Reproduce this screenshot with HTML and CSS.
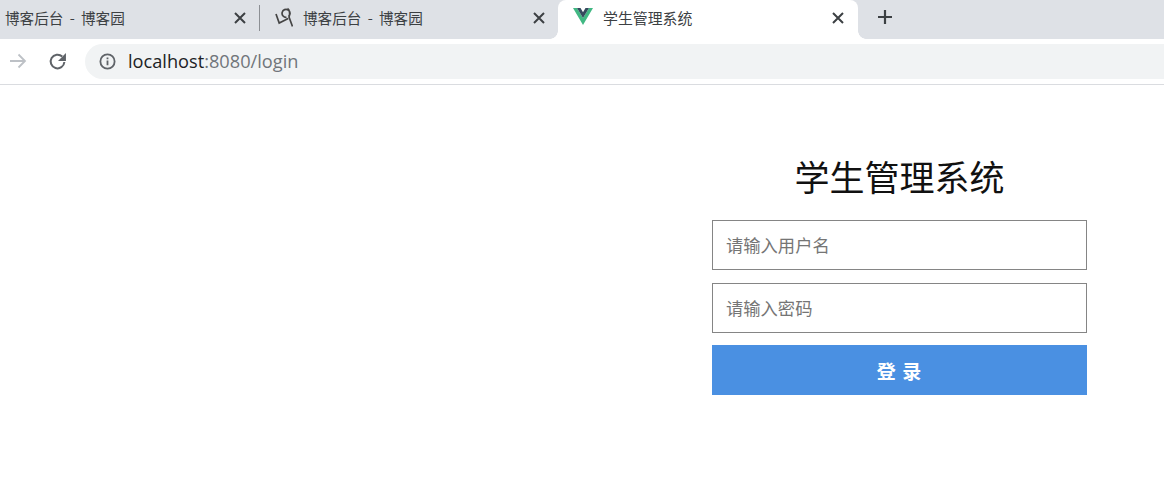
FILE: index.html
```html
<!DOCTYPE html>
<html lang="zh-CN">
<head>
<meta charset="utf-8">
<title>学生管理系统</title>
<link rel="stylesheet" href="styles.css">
</head>
<body>
<div class="tabstrip">
  <div class="tab tab-first">
    <span class="tab-title">博客后台 - 博客园</span>
    <svg class="close" viewBox="0 0 12 12"><path d="M1 1l10 10M11 1L1 11"/></svg>
  </div>
  <div class="tab-sep"></div>
  <div class="tab tab-second">
    <svg class="favicon favicon-cnb" viewBox="0 0 18 20"><path d="M1 7l3.200 9 9-4.500M13.500 9.500a4 4 0 1 0-2 .8M12.500 1.500c2.500 1.500 2.500 6 1.500 8.500l3.500 9.500"/></svg>
    <span class="tab-title">博客后台 - 博客园</span>
    <svg class="close" viewBox="0 0 12 12"><path d="M1 1l10 10M11 1L1 11"/></svg>
  </div>
  <div class="tab tab-active">
    <svg class="favicon favicon-vue" viewBox="0 0 20 17"><path fill="#41b883" d="M0 0h4l6 10 6-10h4L10 17z"/><path fill="#35495e" d="M4 0h3.500L10 4.300 12.500 0H16l-6 10z"/></svg>
    <span class="tab-title">学生管理系统</span>
    <svg class="close" viewBox="0 0 12 12"><path d="M1 1l10 10M11 1L1 11"/></svg>
  </div>
  <svg class="newtab" viewBox="0 0 16 16"><path d="M8 1v14M1 8h14"/></svg>
</div>
<div class="toolbar">
  <svg class="forward" viewBox="0 0 18 18"><path d="M1 9h15M9.500 2.500L16 9l-6.500 6.500"/></svg>
  <svg class="reload" viewBox="0 0 18 18"><path d="M15.500 9.500a6.500 6.500 0 1 1-2-5.200"/><path class="reload-tip" d="M17 1v7.500H9.500z"/></svg>
  <div class="omnibox">
    <svg class="info" viewBox="0 0 16 16"><circle cx="8" cy="8" r="6.700"/><path d="M8 7v4.500M8 4.200v1.600"/></svg>
    <span class="url"><span class="host">localhost</span>:8080/login</span>
  </div>
</div>
<main class="page">
  <form class="login">
    <h1 class="login-title">学生管理系统</h1>
    <input class="field" type="text" placeholder="请输入用户名">
    <input class="field" type="password" placeholder="请输入密码">
    <button class="submit" type="button">登 录</button>
  </form>
</main>
</body>
</html>
```
FILE: styles.css
```css
* { box-sizing: border-box; }
html, body { margin: 0; height: 100%; }
body {
  background: #fff;
  overflow: hidden;
  font-family: "Noto Sans CJK SC", "Liberation Sans", sans-serif;
}
.tabstrip {
  height: 39px;
  background: #dee1e6;
  display: flex;
  align-items: flex-start;
}
.tab {
  height: 39px;
  padding-bottom: 4px;
  display: flex;
  align-items: center;
  flex: none;
}
.tab-title {
  font-size: 14.600px;
  word-spacing: 3px;
  line-height: 20px;
  color: #3c4043;
  flex: 1;
  white-space: nowrap;
}
.close {
  width: 12px;
  height: 12px;
  flex: none;
  fill: none;
  stroke: #3c4043;
  stroke-width: 2;
}
.tab-first { width: 259px; padding-left: 5px; padding-right: 13px; }
.tab-sep { width: 1px; height: 26px; background: #8c8f94; flex: none; margin-top: 5px; }
.tab-second { width: 298px; padding-left: 15px; padding-right: 13px; }
.tab-second .tab-title { margin-left: 10px; }
.tab-active {
  position: relative;
  width: 300px;
  background: #fff;
  padding-left: 15px;
  padding-right: 14px;
  border-radius: 8px 8px 0 0;
}
.tab-active::before,
.tab-active::after {
  content: "";
  position: absolute;
  bottom: 0;
  width: 8px;
  height: 8px;
}
.tab-active::before {
  left: -8px;
  background: radial-gradient(circle at 0 0, transparent 7.500px, #fff 8px);
}
.tab-active::after {
  right: -8px;
  background: radial-gradient(circle at 100% 0, transparent 7.500px, #fff 8px);
}
.tab-active .tab-title { margin-left: 10px; font-size: 14.900px; }
.favicon { flex: none; }
.favicon-cnb {
  width: 18px;
  height: 20px;
  margin-bottom: 1px;
  fill: none;
  stroke: #444;
  stroke-width: 1.700;
}
.favicon-vue { width: 20px; height: 17px; margin-bottom: 3px; }
.newtab {
  width: 16px;
  height: 16px;
  margin: 9px 0 0 19px;
  fill: none;
  stroke: #3c4043;
  stroke-width: 2.200;
  flex: none;
}
.toolbar {
  height: 46px;
  background: #fff;
  border-bottom: 1px solid #dadce0;
  display: flex;
  align-items: center;
  padding: 0 0 1px 9px;
}
.forward {
  width: 18px;
  height: 18px;
  fill: none;
  stroke: #bdc1c6;
  stroke-width: 1.800;
  flex: none;
}
.reload {
  width: 19px;
  height: 19px;
  margin-left: 21px;
  fill: none;
  stroke: #5f6368;
  stroke-width: 1.900;
  flex: none;
}
.reload-tip { fill: #5f6368; stroke: none; }
.omnibox {
  margin-left: 18px;
  flex: 1;
  height: 35px;
  background: #f1f3f4;
  border-radius: 18px 0 0 18px;
  display: flex;
  align-items: center;
  padding-left: 14px;
}
.info {
  width: 17px;
  height: 17px;
  fill: none;
  stroke: #5f6368;
  stroke-width: 1.700;
  flex: none;
}
.url {
  margin-left: 12px;
  font-family: "Open Sans", "Liberation Sans", sans-serif;
  font-size: 18.200px;
  color: #70757a;
}
.host { color: #202124; }
.page {
  display: flex;
  justify-content: flex-end;
  padding: 59px 77px 0 0;
}
.login {
  width: 375px;
  display: flex;
  flex-direction: column;
}
.login-title {
  margin: 0 0 13px;
  height: 63px;
  line-height: 63px;
  font-size: 35px;
  font-weight: 400;
  text-align: center;
  color: #111;
}
.field {
  height: 50px;
  border: 1px solid #858585;
  border-radius: 0;
  padding: 0 13px 2px;
  margin-bottom: 13px;
  font-family: inherit;
  font-size: 17.300px;
  outline: none;
  background: #fff;
}
.field:nth-of-type(2) { margin-bottom: 12px; }
.field::placeholder { color: #757575; opacity: 1; }
.submit {
  height: 50px;
  border: 0;
  background: #4a90e2;
  color: #fff;
  font-family: inherit;
  font-size: 19px;
  font-weight: 700;
  letter-spacing: 1px;
}
```
